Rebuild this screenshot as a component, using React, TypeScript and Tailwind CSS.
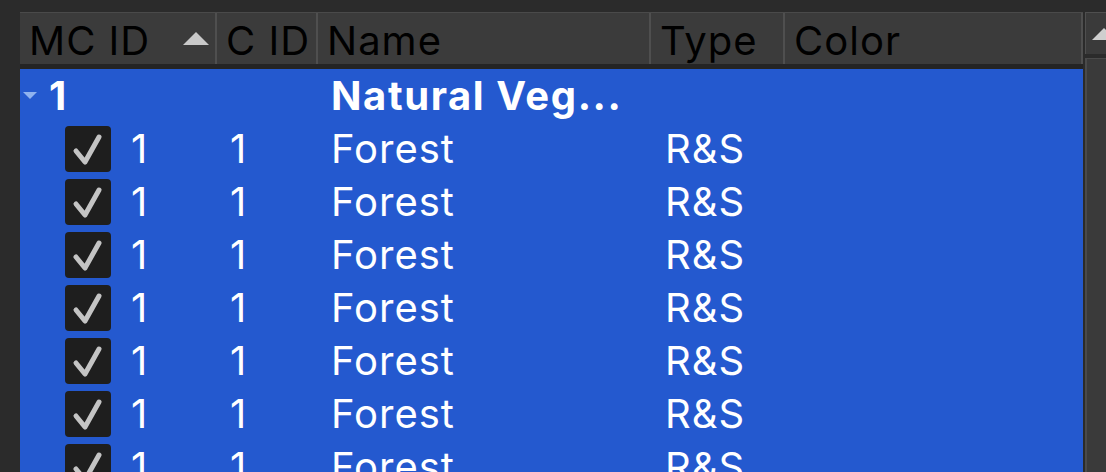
const cols = [
  { label: "MC ID", w: "w-[197px]" },
  { label: "C ID", w: "w-[101px]" },
  { label: "Name", w: "w-[333px]" },
  { label: "Type", w: "w-[134px]" },
  { label: "Color", w: "w-[298px]" },
];

const rows = Array.from({ length: 7 });

function Check() {
  return (
    <div className="w-[46px] h-[46px] rounded-[4px] bg-[#1e1e1e] shrink-0">
      <svg width="46" height="46" viewBox="0 0 46 46">
        <path d="M11 25 L20 36 L34 11" fill="none" stroke="#c4c4c4" strokeWidth="5" strokeLinecap="round" strokeLinejoin="round" />
      </svg>
    </div>
  );
}

export default function App() {
  return (
    <div
      className="w-[1106px] h-[472px] overflow-hidden bg-[#2b2b2b] pt-[12px] pl-[20px] flex"
      style={{ fontFamily: "Inter, 'Liberation Sans', sans-serif" }}
    >
      <div className="w-[1063px] flex flex-col">
        <div className="flex shrink-0 h-[52px] bg-[#3b3b3b] border-t border-[#4a4a4a]">
          {cols.map((c, i) => (
            <div
              key={c.label}
              className={`${c.w} h-full flex items-center pl-[9px] pt-[4px] text-[40px] tracking-[1px] text-black border-r-2 border-[#4f4f4f] relative`}
            >
              {c.label}
              {i === 0 && (
                <svg className="absolute left-[162px] top-[18px]" width="28" height="15" viewBox="0 0 28 15">
                  <path d="M14 1 L27 14 L1 14 Z" fill="#c9c9c9" />
                </svg>
              )}
            </div>
          ))}
        </div>
        <div className="h-[5px] shrink-0 bg-[#242424]" />
        <div className="flex-1 bg-[#2459cf] text-white text-[40px] tracking-[1px]">
          <div className="flex h-[53px] items-center font-bold tracking-[1.6px]">
            <div className="w-[197px] flex items-center">
              <svg className="ml-[3px]" width="14" height="8" viewBox="0 0 14 8">
                <path d="M0 0 L14 0 L7 7 Z" fill="#8fb2ef" />
              </svg>
              <span className="ml-[12px]">1</span>
            </div>
            <div className="w-[101px]" />
            <div className="w-[333px] pl-[13px]">Natural Veg...</div>
          </div>
          {rows.map((_, i) => (
            <div key={i} className="flex h-[53px] items-center">
              <div className="w-[197px] flex items-center pl-[45px] gap-[20px]">
                <Check />
                <span>1</span>
              </div>
              <div className="w-[101px] pl-[13px]">1</div>
              <div className="w-[333px] pl-[13px]">Forest</div>
              <div className="w-[134px] pl-[14px]">R&amp;S</div>
              <div className="w-[298px]" />
            </div>
          ))}
        </div>
      </div>
      <div className="ml-[2px] w-[21px] flex flex-col">
        <div className="h-[42px] shrink-0 bg-[#3a3a3a] border-t border-l border-[#4f4f4f] relative overflow-hidden">
          <svg className="absolute left-[6px] top-[15px]" width="24" height="12" viewBox="0 0 24 12">
            <path d="M12 0 L24 12 L0 12 Z" fill="#cfcfcf" />
          </svg>
        </div>
        <div className="h-[4px] shrink-0 bg-[#2b2b2b]" />
        <div className="flex-1 bg-[#3a3a3a] border-l-2 border-t border-[#4a4a4a]" />
      </div>
    </div>
  );
}
